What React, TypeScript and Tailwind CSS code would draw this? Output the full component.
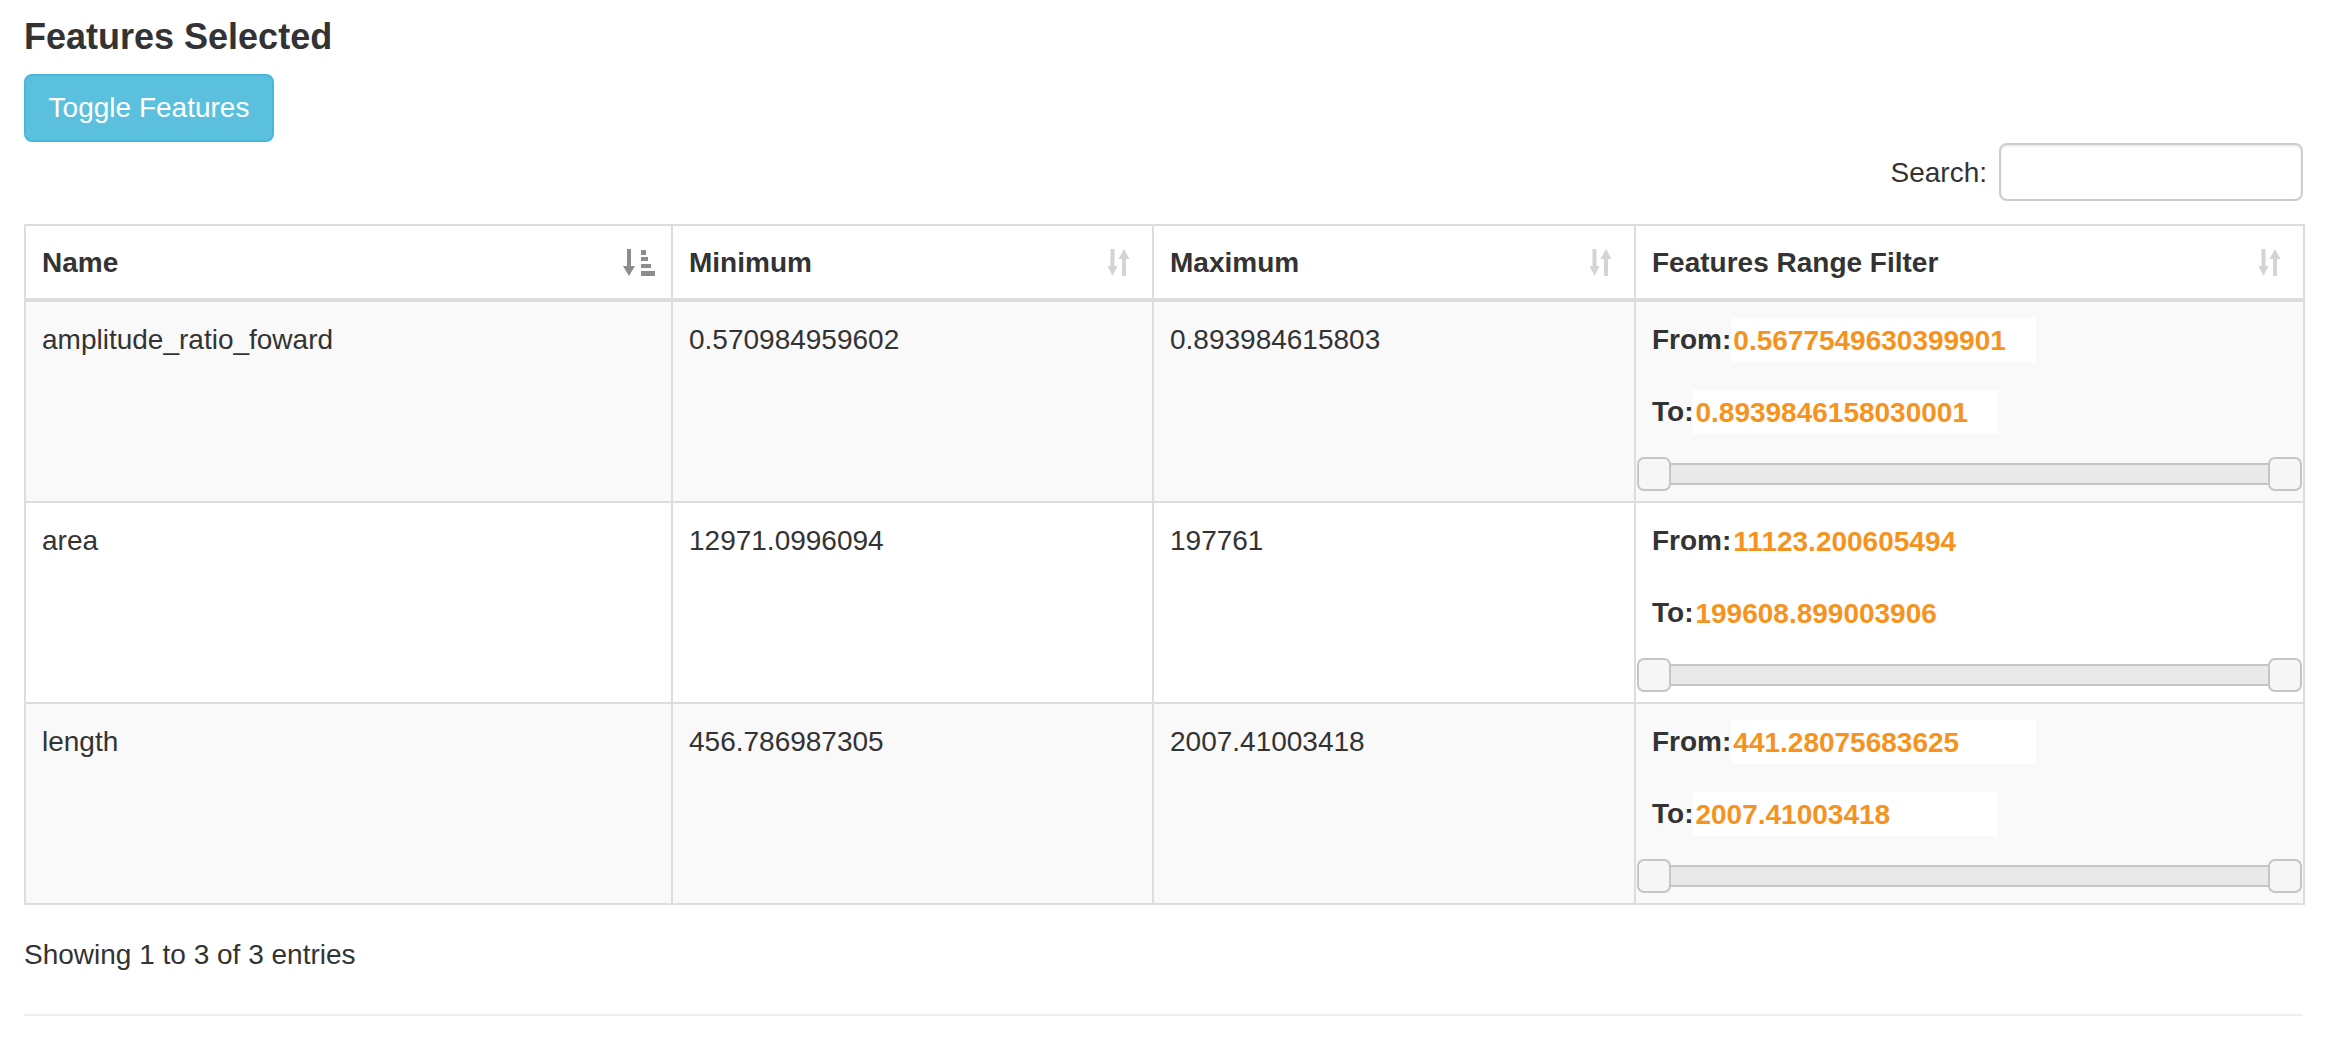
const rows = [
    { name: 'amplitude_ratio_foward', min: '0.570984959602', max: '0.893984615803', from: '0.5677549630399901', to: '0.8939846158030001', striped: true },
    { name: 'area', min: '12971.0996094', max: '197761', from: '11123.200605494', to: '199608.899003906', striped: false },
    { name: 'length', min: '456.786987305', max: '2007.41003418', from: '441.28075683625', to: '2007.41003418', striped: true },
];

function SortActiveIcon() {
    return (
        <svg width="32" height="28" viewBox="0 0 32 28" fill="#8c8c8c">
            <rect x="4" y="0" width="4" height="19" />
            <polygon points="0,17 12,17 6,27" />
            <rect x="18" y="1" width="5" height="5" />
            <rect x="18" y="8" width="7" height="4" />
            <rect x="18" y="15" width="10" height="4" />
            <rect x="18" y="22" width="14" height="5" />
        </svg>
    );
}

function SortBothIcon() {
    return (
        <svg width="28" height="28" viewBox="0 0 28 28" fill="#d4d4d4">
            <rect x="2.5" y="0" width="4" height="19" />
            <polygon points="-0.5,17 9.5,17 4.5,27" />
            <rect x="14" y="8" width="4" height="19" />
            <polygon points="10.5,10 21.5,10 16,0" />
        </svg>
    );
}

function RangeSlider() {
    return (
        <div className="relative h-[22px] border-2 border-[#c5c5c5] bg-[#e9e9e9] rounded-[2px]">
            <div className="absolute -left-[17px] -top-[8px] w-[34px] h-[34px] rounded-[7px] border-2 border-[#c5c5c5] bg-[#f6f6f6]" />
            <div className="absolute -right-[17px] -top-[8px] w-[34px] h-[34px] rounded-[7px] border-2 border-[#c5c5c5] bg-[#f6f6f6]" />
        </div>
    );
}

function AmountLine({ label, value }: { label: string; value: string }) {
    return (
        <div className="flex items-center h-[44px]">
            <span className="font-bold">{label}</span>
            <span className="h-[44px] w-[305px] bg-white pl-[2px] pt-[2px] flex items-center font-bold text-[#f6931f]">{value}</span>
        </div>
    );
}

export default function App() {
    return (
        <div
            className="min-h-[1044px] bg-white pl-[24px] pr-[31px] text-[28px] leading-[40px] text-[#333]"
            style={{ fontFamily: '"Liberation Sans", Arial, sans-serif' }}
        >
            <h4 className="pt-[17px] text-[36px] leading-[40px] font-bold text-[#333]">Features Selected</h4>

            <button className="mt-[17px] w-[250px] h-[68px] rounded-[8px] border-2 border-[#46b8da] bg-[#5bc0de] text-white text-[28px] leading-[40px]">
                Toggle Features
            </button>

            <div className="flex justify-end items-center gap-[12px] mt-[1px] h-[58px]">
                <span className="pt-[2px]">Search:</span>
                <div className="w-[304px] h-[58px] rounded-[8px] border-2 border-[#ccc] bg-white shadow-[inset_0_2px_2px_rgba(0,0,0,0.075)]" />
            </div>

            <table className="mt-[23px] w-[2279px] table-fixed border-collapse">
                <colgroup>
                    <col className="w-[647px]" />
                    <col className="w-[481px]" />
                    <col className="w-[482px]" />
                    <col className="w-[669px]" />
                </colgroup>
                <thead>
                    <tr className="bg-white">
                        {['Name', 'Minimum', 'Maximum', 'Features Range Filter'].map((h, i) => (
                            <th key={h} className="border-2 border-b-4 border-[#ddd] px-[16px] pt-[17px] pb-[15px] text-left font-bold">
                                <div className="flex items-center justify-between">
                                    <span>{h}</span>
                                    {i === 0 ? <SortActiveIcon /> : <SortBothIcon />}
                                </div>
                            </th>
                        ))}
                    </tr>
                </thead>
                <tbody>
                    {rows.map((r) => (
                        <tr key={r.name} className={r.striped ? 'bg-[#f9f9f9]' : 'bg-white'}>
                            <td className="border-2 border-[#ddd] px-[16px] pt-[18px] align-top">{r.name}</td>
                            <td className="border-2 border-[#ddd] px-[16px] pt-[18px] align-top">{r.min}</td>
                            <td className="border-2 border-[#ddd] px-[16px] pt-[18px] align-top">{r.max}</td>
                            <td className="border-2 border-[#ddd] px-[16px] pt-[16px] pb-[16px] align-top">
                                <AmountLine label="From:" value={r.from} />
                                <div className="mt-[28px]">
                                    <AmountLine label="To:" value={r.to} />
                                </div>
                                <div className="mt-[29px]">
                                    <RangeSlider />
                                </div>
                            </td>
                        </tr>
                    ))}
                </tbody>
            </table>

            <div className="mt-[30px]">Showing 1 to 3 of 3 entries</div>

            <div className="mt-[39px] h-[2px] bg-[#eee]" />
        </div>
    );
}
